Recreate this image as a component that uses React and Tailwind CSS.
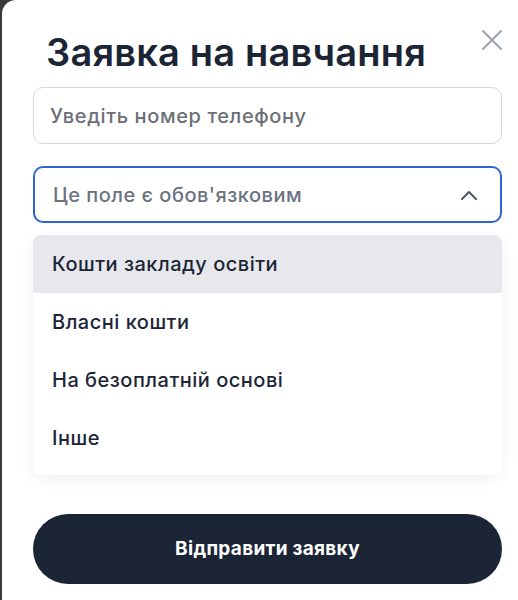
import React from 'react';

const options = ['Кошти закладу освіти', 'Власні кошти', 'На безоплатній основі', 'Інше'];

const font = { fontFamily: 'Inter, "Noto Sans", sans-serif' };

export default function App() {
  return (
    <div className="w-[518px] h-[600px] bg-[#3a3a3a] overflow-hidden flex" style={font}>
      <div className="ml-[2px] flex-1 bg-white rounded-tl-[14px] pl-[31px] pr-4 pt-[28px] relative">
        {/* close button */}
        <button className="absolute top-[29px] right-[15px] text-[#9ca3af]">
          <svg width="22" height="22" viewBox="0 0 22 22" fill="none" stroke="currentColor" strokeWidth="2" strokeLinecap="round">
            <path d="M2 2L20 20M20 2L2 20" />
          </svg>
        </button>

        <h2 className="ml-[13px] text-[38px] leading-[48px] font-semibold text-[#1c2536] tracking-[0.2px]">
          Заявка на навчання
        </h2>

        <div className="mt-[11px] w-[469px] h-[57px] rounded-[10px] border border-[#d4d7dd] flex items-center px-4">
          <span className="text-[20px] font-medium text-[#6b6f76] tracking-[0.6px]">Уведіть номер телефону</span>
        </div>

        <div className="mt-[22px] w-[469px] h-[57px] rounded-[10px] border-2 border-[#2f64d0] flex items-center justify-between pl-[18px] pr-[22px]">
          <span className="text-[20px] font-medium text-[#6b7280] tracking-[0.5px]">Це поле є обов'язковим</span>
          <svg width="18" height="10" viewBox="0 0 18 10" fill="none" stroke="#4b5563" strokeWidth="2" strokeLinecap="round" strokeLinejoin="round">
            <path d="M2 9L9 2L16 9" />
          </svg>
        </div>

        <ul className="mt-[12px] w-[469px] rounded-[8px] bg-white pb-[8px] shadow-[0_4px_16px_rgba(0,0,0,0.06)] overflow-hidden">
          {options.map((o, i) => (
            <li
              key={o}
              className={`h-[58px] flex items-center pl-[19px] text-[20px] font-medium text-[#1c2536] tracking-[0.5px] ${i === 0 ? 'bg-[#e7e8ec]' : ''}`}
            >
              {o}
            </li>
          ))}
        </ul>

        <button className="mt-[39px] w-[469px] h-[70px] rounded-full bg-[#1c2536] text-white text-[19px] font-bold tracking-[0.3px]">
          Відправити заявку
        </button>
      </div>
    </div>
  );
}
